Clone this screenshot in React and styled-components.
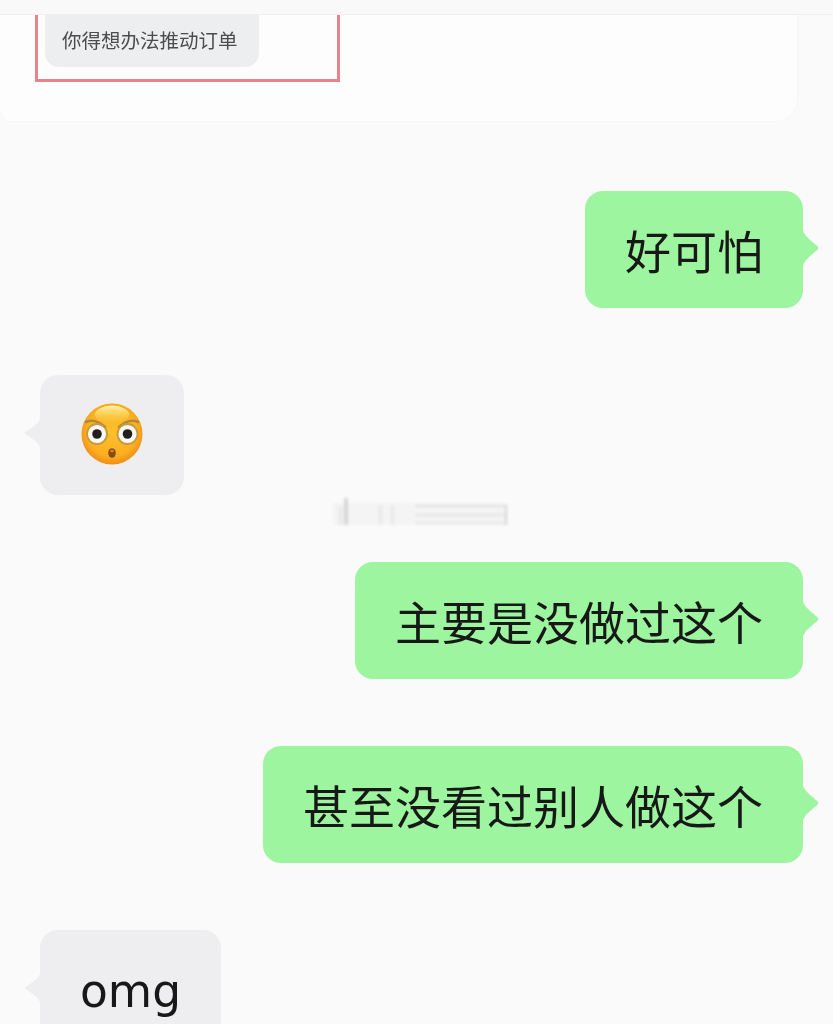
import React from "react";
import styled, { createGlobalStyle } from "styled-components";

const Global = createGlobalStyle`
  html, body { margin: 0; padding: 0; background: #fafafa; }
  body { font-family: "Noto Sans CJK SC", "Noto Sans", sans-serif; }
`;

const Page = styled.div`
  width: 833px;
  height: 1024px;
  overflow: hidden;
  background: #fafafa;
`;

const TopStrip = styled.div`
  height: 14px;
  background: #f9f9f9;
  border-bottom: 1px solid #efefef;
`;

const QuoteCard = styled.div`
  width: 798px;
  height: 107px;
  background: #fdfdfd;
  border-bottom: 1px solid #f7f7f7;
  border-right: 1px solid #f7f7f7;
  border-bottom-right-radius: 22px;
  border-bottom-left-radius: 12px;
  box-sizing: border-box;
  padding-left: 35px;
`;

const RedFrame = styled.div`
  width: 305px;
  height: 67px;
  box-sizing: border-box;
  border: 3px solid #e8838a;
  border-top: none;
  padding-left: 7px;
  filter: blur(0.6px);
`;

const QuoteChip = styled.div`
  width: 214px;
  height: 52px;
  box-sizing: border-box;
  background: #eceef0;
  border-radius: 0 0 14px 14px;
  padding-left: 17px;
  font-size: 19.5px;
  line-height: 50px;
  color: #4c4c4c;
  white-space: nowrap;
  filter: blur(0.5px);
`;

const Thread = styled.div`
  display: flex;
  flex-direction: column;
  padding: 0 30px 0 40px;
`;

const Row = styled.div`
  display: flex;
  justify-content: ${(p) => (p.$mine ? "flex-end" : "flex-start")};
  margin-top: ${(p) => p.$gap}px;
`;

const Bubble = styled.div`
  position: relative;
  box-sizing: border-box;
  display: flex;
  align-items: center;
  justify-content: center;
  height: ${(p) => p.$h}px;
  width: ${(p) => p.$w}px;
  padding-bottom: 1px;
  border-radius: 18px;
  background: ${(p) => (p.$mine ? "#9df59f" : "#eeeef0")};
  color: #181818;
  font-size: 46px;
  line-height: 1;
  white-space: nowrap;
  filter: blur(0.35px);
`;

const Tail = styled.svg`
  position: absolute;
  ${(p) => (p.$mine ? "top: 35px; right: -16px; width: 17px; height: 44px;" : "top: 40px; left: -17px; width: 18px; height: 36px;")}
`;

const Latin = styled.span`
  font-family: "DejaVu Sans", sans-serif;
  font-size: 45.5px;
  color: #181818;
  position: relative;
  top: 4px;
`;

const EmojiFace = styled.svg`
  width: 62px;
  height: 62px;
  margin-bottom: 1px;
  filter: blur(0.5px);
`;

const Stamp = styled.div`
  display: flex;
  justify-content: center;
  height: 32px;
  margin-top: 2px;
  margin-bottom: 33px;
  padding-right: 3px;
`;

const Redaction = styled.svg`
  width: 190px;
  height: 32px;
  opacity: 0.85;
  filter: blur(1.7px);
`;

const TailShape = ({ mine, color }) => (
  <Tail $mine={mine} viewBox={mine ? "0 0 17 44" : "0 0 18 36"}>
    {mine ? (
      <path d="M0 0 C1 7 4 10 7 13 L14 19 C17 21 17 23 14 25 L7 31 C4 34 1 37 0 44 Z" fill={color} />
    ) : (
      <path d="M18 0 C17 6 14 9 11 11 L4 16 C1 17 1 19 4 20 L11 25 C14 27 17 30 18 36 Z" fill={color} />
    )}
  </Tail>
);

const EmojiIcon = () => (
  <EmojiFace viewBox="0 0 62 62">
    <defs>
      <radialGradient id="face" cx="50%" cy="45%" r="55%">
        <stop offset="0%" stopColor="#fdc02c" />
        <stop offset="75%" stopColor="#fbb020" />
        <stop offset="100%" stopColor="#ef8e1a" />
      </radialGradient>
      <linearGradient id="shine" x1="0" y1="0" x2="0" y2="1">
        <stop offset="0%" stopColor="#fff4b0" />
        <stop offset="100%" stopColor="#ffd94f" stopOpacity="0" />
      </linearGradient>
    </defs>
    <circle cx="31" cy="31" r="30.5" fill="url(#face)" />
    <ellipse cx="31" cy="11.5" rx="17" ry="9" fill="url(#shine)" />
    <path d="M5 19 Q14 15 24 24" fill="none" stroke="#b08a3c" strokeWidth="2.6" strokeLinecap="round" />
    <path d="M57 19 Q48 15 38 24" fill="none" stroke="#b08a3c" strokeWidth="2.6" strokeLinecap="round" />
    <circle cx="16" cy="31" r="10" fill="#fbf9f2" stroke="#c59a45" strokeWidth="1.8" />
    <circle cx="46.5" cy="31" r="10" fill="#fbf9f2" stroke="#c59a45" strokeWidth="1.8" />
    <circle cx="16" cy="31" r="4.8" fill="#242020" />
    <circle cx="46.5" cy="31" r="4.8" fill="#242020" />
    <ellipse cx="31" cy="50" rx="3.8" ry="4.8" fill="#8a4a14" />
    <ellipse cx="31" cy="48" rx="1.8" ry="1.4" fill="#c98a3a" />
  </EmojiFace>
);

const RedactedStamp = () => (
  <Redaction viewBox="0 0 190 32">
    <rect x="8" y="6" width="175" height="22" fill="#f3f3f3" />
    <rect x="19" y="1" width="4" height="27" fill="#cfcfcf" />
    <rect x="14" y="10" width="3" height="18" fill="#e4e4e4" />
    <rect x="54" y="8" width="3" height="20" fill="#e6e6e6" />
    <rect x="66" y="8" width="3" height="20" fill="#e6e6e6" />
    <rect x="90" y="8" width="92" height="2" fill="#dedede" />
    <rect x="90" y="17" width="92" height="2" fill="#e0e0e0" />
    <rect x="90" y="25" width="92" height="2" fill="#e2e2e2" />
    <rect x="180" y="8" width="2" height="20" fill="#cfcfcf" />
  </Redaction>
);

const GREEN = "#9df59f";
const GREY = "#eeeef0";

export default function App() {
  return (
    <Page>
      <Global />
      <TopStrip />
      <QuoteCard>
        <RedFrame>
          <QuoteChip>你得想办法推动订单</QuoteChip>
        </RedFrame>
      </QuoteCard>
      <Thread>
        <Row $mine $gap={69}>
          <Bubble $mine $w={218} $h={117}>
            好可怕
            <TailShape mine color={GREEN} />
          </Bubble>
        </Row>
        <Row $gap={67}>
          <Bubble $w={144} $h={120}>
            <EmojiIcon />
            <TailShape color={GREY} />
          </Bubble>
        </Row>
        <Stamp>
          <RedactedStamp />
        </Stamp>
        <Row $mine $gap={0}>
          <Bubble $mine $w={448} $h={117}>
            主要是没做过这个
            <TailShape mine color={GREEN} />
          </Bubble>
        </Row>
        <Row $mine $gap={67}>
          <Bubble $mine $w={540} $h={117}>
            甚至没看过别人做这个
            <TailShape mine color={GREEN} />
          </Bubble>
        </Row>
        <Row $gap={67}>
          <Bubble $w={181} $h={117}>
            <Latin>omg</Latin>
            <TailShape color={GREY} />
          </Bubble>
        </Row>
      </Thread>
    </Page>
  );
}
